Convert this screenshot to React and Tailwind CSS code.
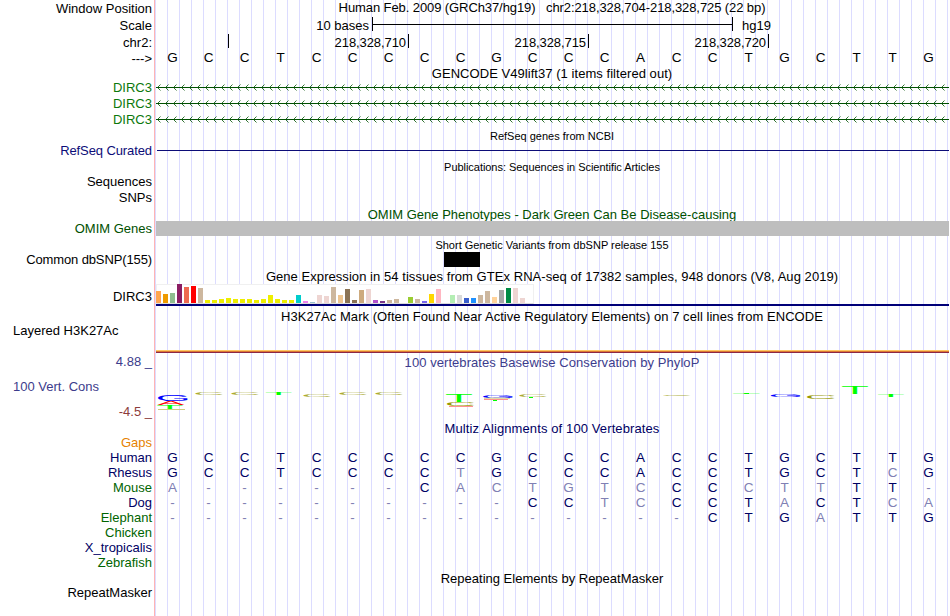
import clsx from "clsx";

const SEQUENCE = "GCCTCCCCCGCCCACCTGCTTG";

const TICKS = [
  { x: 228, label: "" },
  { x: 408, label: "218,328,710" },
  { x: 588, label: "218,328,715" },
  { x: 768, label: "218,328,720" },
];

const ALIGNMENTS = [
  { name: "Human", color: "text-[#000064]", bases: "GCCTCCCCCGCCCACCTGCTTG", faded: [] },
  { name: "Rhesus", color: "text-[#000064]", bases: "GCCTCCCCTGCCCACCTGCTCG", faded: [8, 20] },
  { name: "Mouse", color: "text-[#006400]", bases: "A------CACTGTCCCCTTTT-", faded: [0, 8, 9, 10, 11, 12, 13, 16, 17, 18] },
  { name: "Dog", color: "text-[#000064]", bases: "----------CCTCCCTACTCA", faded: [12, 13, 17, 20, 21] },
  { name: "Elephant", color: "text-[#006400]", bases: "---------------CTGATTG", faded: [18] },
  { name: "Chicken", color: "text-[#006400]", bases: "", faded: [] },
  { name: "X_tropicalis", color: "text-[#000064]", bases: "", faded: [] },
  { name: "Zebrafish", color: "text-[#006400]", bases: "", faded: [] },
];

// one entry per GTEx tissue: [height, color]
const TISSUES = [
  [12, "#ffa54f"], [9, "#ee9a00"], [10, "#8fbc8f"], [19, "#8b1c62"], [16, "#ee6a50"], [17, "#ff0000"],
  [15, "#cdb79e"], [3, "#eeee00"], [3, "#eeee00"], [4, "#eeee00"], [5, "#eeee00"], [4, "#eeee00"],
  [4, "#eeee00"], [4, "#eeee00"], [3, "#eeee00"], [4, "#eeee00"], [8, "#eeee00"], [4, "#eeee00"],
  [3, "#eeee00"], [3, "#eeee00"], [8, "#00cdcd"], [2, "#ee82ee"], [1, "#9ac0cd"], [8, "#eed5d2"],
  [7, "#eed5d2"], [16, "#cdb79e"], [8, "#eec591"], [14, "#8b7355"], [3, "#8b7355"], [13, "#cdaa7d"],
  [14, "#eed5d2"], [3, "#b452cd"], [2, "#7a378b"], [3, "#cdb79e"], [4, "#cdb79e"], [0, "#cdb79e"],
  [6, "#9acd32"], [4, "#cdb79e"], [2, "#7a67ee"], [9, "#ffd700"], [14, "#ffb6c1"], [0, "#cd9b1d"],
  [8, "#b4eeb4"], [8, "#d9d9d9"], [5, "#3a5fcd"], [5, "#1e90ff"], [8, "#cdb79e"], [12, "#cdb79e"],
  [6, "#ffd39b"], [13, "#a6a6a6"], [15, "#008b45"], [15, "#eed5d2"], [5, "#eed5d2"], [0, "#ff00ff"],
];

// [base, x, y, width, height, opacity], y is counted from the top of the track
const LOGO = [
  ["G", 158, 25, 30, 6.2, 1],
  ["A", 157.3, 31.2, 27, 4, 1],
  ["T", 157.3, 35.2, 25.5, 4, 1],
  ["C", 195.3, 23, 27.5, 2.2, 0.8],
  ["C", 231.3, 23, 27.5, 2.2, 0.8],
  ["T", 265.7, 23.2, 26, 2, 1],
  ["C", 303.3, 25, 27.5, 2.2, 0.8],
  ["C", 339.3, 23, 27.5, 2.2, 0.8],
  ["C", 375.3, 23, 27.5, 2.2, 0.8],
  ["T", 446, 25.2, 26, 7, 1],
  ["C", 447, 32, 27.5, 4.2, 1],
  ["G", 483, 25.2, 30, 2.6, 1],
  ["C", 519.3, 25.2, 27.5, 2, 0.8],
  ["C", 663.3, 25.2, 27.5, 1.2, 0.8],
  ["T", 733.3, 23.2, 26.4, 1.2, 1],
  ["G", 770.7, 25.2, 30, 2.2, 1],
  ["C", 807, 25.2, 28, 4, 1],
  ["T", 842, 16.2, 26, 7.6, 1],
  ["T", 878, 25.2, 26, 2, 1],
];

// bases too flat to show as letters: [x, y, width, height, color]
const SLIVERS = [
  [158, 39, 27, 1, "#cccc80"],
  [449, 36, 24, 1, "#ff9090"],
  [484, 27.5, 26, 1.5, "#dcdca8"],
  [484, 29, 24, 1, "#ff9090"],
  [493, 30, 4, 1, "#00ff00"],
  [529, 27, 4, 1, "#00ff00"],
  [745, 23, 4, 1, "#00ff00"],
];

// ink boxes of the glyphs at font-size 100
const GLYPHS = {
  A: { left: 0.3, width: 66.1, top: 68.8, height: 68.8, fill: "#ff0000" },
  C: { left: 5, width: 64, top: 69.8, height: 70.8, fill: "#999900" },
  G: { left: 5, width: 67, top: 69.8, height: 70.8, fill: "#0000ff" },
  T: { left: 2.1, width: 56.9, top: 68.8, height: 68.8, fill: "#00ff00" },
};

const Row = ({ label, labelClass, className, children }) => (
  <div className={clsx("flex shrink-0", className)}>
    <div className={clsx("flex w-[152px] shrink-0 items-center justify-end whitespace-pre", labelClass)}>
      {label}
    </div>
    <div className="flex w-[797px] shrink-0 flex-col pl-1">{children}</div>
  </div>
);

const Title = ({ className, children }) => (
  <div className={clsx("flex h-full w-[792px] items-center justify-center whitespace-pre", className)}>
    {children}
  </div>
);

const Bases = ({ bases, faded = [], className }) => (
  <div className={clsx("-ml-[1.5px] flex h-full items-center text-[13.5px]", className)}>
    {bases.split("").map((base, i) => (
      <span
        key={i}
        className={clsx("w-9 shrink-0 text-center", (base === "-" || faded.includes(i)) && "text-[#8080b4]")}
      >
        {base}
      </span>
    ))}
  </div>
);

const Intron = () => (
  <svg width="793" height="16" className="block">
    <path d="M0 7.5H793" stroke="#005000" />
    {Array.from({ length: 100 }, (_, i) => (
      <path key={i} d={`M${i * 8 + 4.5} 4.5l-3 3l3 3`} fill="none" stroke="#005000" strokeWidth="0.8" />
    ))}
  </svg>
);

const Ruler = () => (
  <svg width="793" height="16" className="block">
    {TICKS.map(({ x, label }) => (
      <g key={x}>
        <path d={`M${x - 155.5} 1V15`} stroke="#000" />
        <text x={x - 158} y="14" textAnchor="end" fontSize="13" letterSpacing="-0.08">
          {label}
        </text>
      </g>
    ))}
  </svg>
);

const ScaleBar = () => (
  <div className="flex h-full items-center">
    <span className="w-[213px] pt-px text-right">10 bases</span>
    <svg width="361" height="17" className="ml-[3px] block">
      <path d="M0.5 1V15M360.5 1V15M0 8.5H361" stroke="#000" />
    </svg>
    <span className="ml-[9px] pt-px">hg19</span>
  </div>
);

const Expression = () => (
  <div>
    <div className="flex h-[20px] w-[378px] items-end gap-0.5 border border-[#f0f0f0] border-b-[#dcdcdc] bg-white">
      {TISSUES.map(([height, color], i) => (
        <div key={i} className="-ml-px mr-px w-[5px] shrink-0" style={{ height, backgroundColor: color }} />
      ))}
    </div>
    <div className="h-0.5 bg-[#000078]" />
  </div>
);

const Conservation = () => (
  <svg width="793" height="50" viewBox="156 0 793 50" className="block">
    {SLIVERS.map(([x, y, w, h, fill]) => (
      <rect key={`${x}-${y}`} x={x} y={y} width={w} height={h} fill={fill} />
    ))}
    {LOGO.map(([base, x, y, w, h, opacity], i) => {
      const g = GLYPHS[base];
      const sx = w / g.width;
      const sy = h / g.height;
      return (
        <text
          key={i}
          fontSize="100"
          fill={g.fill}
          opacity={opacity}
          transform={`translate(${x - g.left * sx} ${y + g.top * sy}) scale(${sx} ${sy})`}
        >
          {base}
        </text>
      );
    })}
  </svg>
);

export default function App() {
  return (
    <div className="flex h-[616px] w-[950px] overflow-hidden bg-white font-['Liberation_Sans',Arial,sans-serif] text-[13px] leading-[15px] text-black">
      <div className="flex w-full flex-col bg-[linear-gradient(to_right,#fff_154px,#ffb4b4_154px,#ffb4b4_155px,transparent_155px),repeating-linear-gradient(to_right,transparent_0_11px,#dcdcff_11px_12px)]">
        <Row className="h-4" label="Window Position">
          <Title className="pb-0.5 tracking-[-0.09px]">
            Human Feb. 2009 (GRCh37/hg19)   chr2:218,328,704-218,328,725 (22 bp)
          </Title>
        </Row>
        <Row className="h-[17px]" label="Scale" labelClass="pt-0.5">
          <ScaleBar />
        </Row>
        <Row className="h-4" label="chr2:" labelClass="pt-0.5">
          <Ruler />
        </Row>
        <Row className="h-4" label="--->" labelClass="pt-0.5">
          <Bases bases={SEQUENCE} />
        </Row>
        <Row className="h-[15px]">
          <Title className="pt-0.5 tracking-[0.05px]">GENCODE V49lift37 (1 items filtered out)</Title>
        </Row>
        {[0, 1, 2].map((i) => (
          <Row key={i} className="h-4" label="DIRC3" labelClass="pb-0.5 text-[#0c780c]">
            <Intron />
          </Row>
        ))}
        <Row className="h-[15px]">
          <Title className="pt-px text-[11px]">RefSeq genes from NCBI</Title>
        </Row>
        <Row className="h-[15px]" label="RefSeq Curated" labelClass="tracking-[-0.1px] text-[#0c0c78]">
          <div className="mt-[7px] ml-px h-px bg-[#0c0c78]" />
        </Row>
        <Row className="h-4">
          <Title className="pt-0.5 text-[11px] tracking-[-0.04px]">Publications: Sequences in Scientific Articles</Title>
        </Row>
        <Row className="h-4" label="Sequences" labelClass="pb-0.5" />
        <Row className="h-4" label="SNPs" labelClass="pb-0.5" />
        <Row className="h-[15px]">
          <Title className="pt-0.5 text-[#005000]">OMIM Gene Phenotypes - Dark Green Can Be Disease-causing</Title>
        </Row>
        <Row className="h-4" label="OMIM Genes" labelClass="pb-0.5 text-[#005000]">
          <div className="h-[15px] bg-[#bebebe]" />
        </Row>
        <Row className="h-[15px]">
          <Title className="pt-0.5 text-[11px]">Short Genetic Variants from dbSNP release 155</Title>
        </Row>
        <Row className="h-4" label="Common dbSNP(155)" labelClass="pb-0.5 tracking-[-0.12px]">
          <div className="ml-[288px] h-[15px] w-9 bg-black" />
        </Row>
        <Row className="h-4">
          <Title className="tracking-[0.055px]">
            Gene Expression in 54 tissues from GTEx RNA-seq of 17382 samples, 948 donors (V8, Aug 2019)
          </Title>
        </Row>
        <Row className="h-6" label="DIRC3">
          <Expression />
        </Row>
        <Row className="h-4">
          <Title className="tracking-[0.05px]">
            H3K27Ac Mark (Often Found Near Active Regulatory Elements) on 7 cell lines from ENCODE
          </Title>
        </Row>
        <Row className="h-[31px]" label="Layered H3K27Ac" labelClass="h-[14px] !justify-start pb-0.5 pl-[13px]">
          <div className="mt-[26px] h-px bg-[#ffc864]" />
          <div className="h-px bg-[#dc7832]" />
          <div className="h-px bg-[#8c2846]" />
        </Row>
        <Row className="h-[15px]" label="4.88 _" labelClass="pb-0.5 text-[#3c3c8c]">
          <Title className="tracking-[0.06px] text-[#3c3c8c]">100 vertebrates Basewise Conservation by PhyloP</Title>
        </Row>
        <div className="flex h-[50px] shrink-0">
          <div className="flex w-[152px] flex-col justify-between pt-[9px] pb-px">
            <span className="pl-[13px] text-[#3c3c8c]">100 Vert. Cons</span>
            <span className="text-right text-[#8c3c3c]">-4.5 _</span>
          </div>
          <div className="pl-1">
            <Conservation />
          </div>
        </div>
        <Row className="h-[15px]">
          <Title className="pt-px tracking-[0.11px] text-[#000064]">Multiz Alignments of 100 Vertebrates</Title>
        </Row>
        <Row className="h-[15px]" label="Gaps" labelClass="text-[#e68200]" />
        {ALIGNMENTS.map(({ name, color, bases, faded }) => (
          <Row key={name} className="h-[15px]" label={name} labelClass={color}>
            <Bases bases={bases} faded={faded} className="text-[#000064]" />
          </Row>
        ))}
        <Row className="h-4">
          <Title>Repeating Elements by RepeatMasker</Title>
        </Row>
        <Row className="h-[15px]" label="RepeatMasker" labelClass="pb-0.5" />
      </div>
    </div>
  );
}
